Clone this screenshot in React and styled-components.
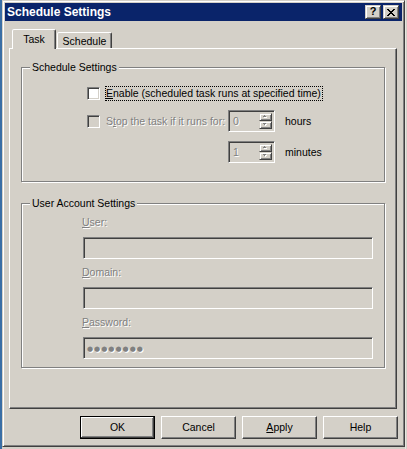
import React from "react";
import styled, { createGlobalStyle } from "styled-components";

const FACE = "#d4d0c8";
const SHADOW = "#808080";
const DARK = "#404040";
const HILITE = "#ffffff";
const CAPTION = "#0a246a";

const Global = createGlobalStyle`
  html, body { margin: 0; padding: 0; background: ${FACE}; }
  body {
    font-family: "Liberation Sans", Arial, sans-serif;
    font-size: 10.5px;
    color: #000;
  }
  * { box-sizing: border-box; }
`;

const Screen = styled.div`
  display: flex;
  width: 407px;
  height: 449px;
  overflow: hidden;
  background: ${FACE};
`;

const Desktop = styled.div`
  width: 2px;
  flex-shrink: 0;
  background: #3a6ea5;
`;

const BehindWindow = styled.div`
  flex: 1;
  background: ${FACE};
  border-left: 1px solid #e8e6e0;
`;

const Dialog = styled.div`
  width: 403px;
  height: 447px;
  flex-shrink: 0;
  background: ${FACE};
  border: 1px solid;
  border-color: ${FACE} ${DARK} ${DARK} ${FACE};
  box-shadow: inset 1px 1px ${HILITE}, inset -1px -1px ${SHADOW};
  padding: 2px;
  display: flex;
  flex-direction: column;
`;

const TitleBar = styled.div`
  height: 18px;
  background: ${CAPTION};
  display: flex;
  align-items: center;
  padding: 0 3px 0 2px;
  flex-shrink: 0;
`;

const TitleText = styled.span`
  color: #fff;
  font-weight: bold;
  font-size: 12px;
  line-height: 14px;
`;

const CaptionButtons = styled.div`
  margin-left: auto;
  display: flex;
  gap: 2px;
`;

const CaptionButton = styled.div`
  width: 16px;
  height: 14px;
  background: ${FACE};
  border: 1px solid;
  border-color: ${FACE} ${DARK} ${DARK} ${FACE};
  box-shadow: inset 1px 1px ${HILITE}, inset -1px -1px ${SHADOW};
  display: flex;
  align-items: center;
  justify-content: center;
  font-weight: bold;
  font-size: 11px;
  line-height: 11px;
  color: #000;
  padding-bottom: ${(p) => (p.$glyph ? 1 : 0)}px;
`;

const Content = styled.div`
  flex: 1;
  display: flex;
  flex-direction: column;
  padding: 8px 5px 0 4px;
`;

const TabRow = styled.div`
  display: flex;
  align-items: flex-end;
  height: 19px;
  padding-left: 3px;
  position: relative;
  z-index: 1;
`;

const Tab = styled.div`
  width: ${(p) => p.$w}px;
  height: ${(p) => (p.$active ? 20 : 16)}px;
  margin-bottom: ${(p) => (p.$active ? -1 : 0)}px;
  margin-left: ${(p) => p.$ml || 0}px;
  background: ${FACE};
  border: 1px solid;
  border-bottom: none;
  border-color: ${HILITE} ${DARK} transparent ${HILITE};
  border-radius: 2px 2px 0 0;
  box-shadow: inset -1px 0 ${SHADOW};
  display: flex;
  justify-content: center;
  padding-top: ${(p) => (p.$active ? 3 : 2)}px;
  line-height: 13px;
`;

const Panel = styled.div`
  height: 361px;
  flex-shrink: 0;
  border: 1px solid;
  border-color: ${HILITE} ${DARK} ${DARK} ${HILITE};
  box-shadow: inset -1px -1px ${SHADOW};
  padding: 18px 10px 0 11px;
  display: flex;
  flex-direction: column;
  gap: 21px;
`;

const Group = styled.div`
  position: relative;
  width: 364px;
  border: 1px solid ${SHADOW};
  box-shadow: inset 1px 1px ${HILITE}, 1px 1px ${HILITE};
  padding: ${(p) => p.$pad};
`;

const GroupTitle = styled.span`
  position: absolute;
  top: -7px;
  left: 8px;
  padding: 0 2px;
  background: ${FACE};
  line-height: 13px;
  white-space: nowrap;
`;

const OptionsGrid = styled.div`
  display: grid;
  grid-template-columns: 141px 47px auto;
  grid-template-rows: 15px 22px 22px;
  row-gap: 9px;
  align-items: center;
`;

const CheckRow = styled.div`
  display: flex;
  align-items: center;
  grid-column: ${(p) => (p.$span ? "1 / -1" : "auto")};
  white-space: nowrap;
`;

const CheckBox = styled.span`
  width: 13px;
  height: 13px;
  flex-shrink: 0;
  border: 1px solid;
  border-color: ${SHADOW} ${HILITE} ${HILITE} ${SHADOW};
  box-shadow: inset 1px 1px ${DARK}, inset -1px -1px ${FACE};
  background: ${(p) => (p.$disabled ? FACE : HILITE)};
`;

const Label = styled.span`
  line-height: 13px;
  white-space: nowrap;
  margin-left: ${(p) => p.$ml || 0}px;
  color: ${(p) => (p.$disabled ? SHADOW : "#000")};
  text-shadow: ${(p) => (p.$disabled ? `1px 1px 0 ${HILITE}` : "none")};
  border: ${(p) => (p.$focus ? "1px dotted #000" : "none")};
  padding: ${(p) => (p.$focus ? "0 1px 0 0" : "0")};
`;

const Key = styled.span`
  text-decoration: underline;
`;

const Unit = styled.span`
  line-height: 13px;
  margin-left: 10px;
`;

const SpinBox = styled.div`
  width: 47px;
  height: 22px;
  border: 1px solid;
  border-color: ${SHADOW} ${HILITE} ${HILITE} ${SHADOW};
  box-shadow: inset 1px 1px ${DARK}, inset -1px -1px ${FACE};
  background: ${FACE};
  padding: 2px;
  display: flex;
`;

const SpinValue = styled.span`
  flex: 1;
  padding: 2px 0 0 2px;
  line-height: 13px;
  color: ${SHADOW};
  text-shadow: 1px 1px 0 ${HILITE};
`;

const SpinButtons = styled.div`
  width: 13px;
  display: flex;
  flex-direction: column;
`;

const SpinHalf = styled.div`
  flex: 1;
  background: ${FACE};
  border: 1px solid;
  border-color: ${FACE} ${DARK} ${DARK} ${FACE};
  box-shadow: inset 1px 1px ${HILITE}, inset -1px -1px ${SHADOW};
  display: flex;
  align-items: center;
  justify-content: center;
`;

const FieldLabel = styled.div`
  line-height: 13px;
  color: ${SHADOW};
  text-shadow: 1px 1px 0 ${HILITE};
  margin: ${(p) => (p.$first ? "0" : "7px")} 0 8px -1px;
`;

const TextBox = styled.div`
  width: 290px;
  height: 22px;
  border: 1px solid;
  border-color: ${SHADOW} ${HILITE} ${HILITE} ${SHADOW};
  box-shadow: inset 1px 1px ${DARK}, inset -1px -1px ${FACE};
  background: ${FACE};
  padding: 3px 0 0 3px;
  display: flex;
  align-items: center;
`;

const Dots = styled.span`
  font-family: "DejaVu Sans", sans-serif;
  font-size: 7px;
  line-height: 13px;
  letter-spacing: 1px;
  color: ${SHADOW};
  text-shadow: 1px 1px 0 ${HILITE};
`;

const ButtonRow = styled.div`
  display: flex;
  justify-content: flex-end;
  gap: 6px;
  margin-top: 7px;
  margin-right: -1px;
`;

const Button = styled.div`
  width: 75px;
  height: 23px;
  background: ${FACE};
  display: flex;
  align-items: center;
  justify-content: center;
  line-height: 13px;
  border: 1px solid;
  border-color: ${(p) =>
    p.$default ? "#000" : `${HILITE} ${DARK} ${DARK} ${HILITE}`};
  box-shadow: ${(p) =>
    p.$default
      ? `inset -1px -1px ${DARK}, inset 1px 1px ${HILITE}, inset -2px -2px ${SHADOW}`
      : `inset -1px -1px ${SHADOW}`};
`;

const CloseGlyph = () => (
  <svg width="8" height="7" viewBox="0 0 8 7" shapeRendering="crispEdges">
    <g fill="#000">
      <rect x="0" y="0" width="2" height="1" />
      <rect x="6" y="0" width="2" height="1" />
      <rect x="1" y="1" width="2" height="1" />
      <rect x="5" y="1" width="2" height="1" />
      <rect x="2" y="2" width="4" height="1" />
      <rect x="3" y="3" width="2" height="1" />
      <rect x="2" y="4" width="4" height="1" />
      <rect x="1" y="5" width="2" height="1" />
      <rect x="5" y="5" width="2" height="1" />
      <rect x="0" y="6" width="2" height="1" />
      <rect x="6" y="6" width="2" height="1" />
    </g>
  </svg>
);

const ArrowShape = ({ up }) =>
  up ? (
    <>
      <rect x="1" y="0" width="1" height="1" />
      <rect x="0" y="1" width="3" height="1" />
    </>
  ) : (
    <>
      <rect x="0" y="0" width="3" height="1" />
      <rect x="1" y="1" width="1" height="1" />
    </>
  );

const Arrow = ({ up }) => (
  <svg width="5" height="4" viewBox="0 0 5 4" shapeRendering="crispEdges">
    <g fill={HILITE} transform="translate(1,1)">
      <ArrowShape up={up} />
    </g>
    <g fill={SHADOW}>
      <ArrowShape up={up} />
    </g>
  </svg>
);

const Spinner = ({ value }) => (
  <SpinBox>
    <SpinValue>{value}</SpinValue>
    <SpinButtons>
      <SpinHalf>
        <Arrow up />
      </SpinHalf>
      <SpinHalf>
        <Arrow />
      </SpinHalf>
    </SpinButtons>
  </SpinBox>
);

export default function App() {
  return (
    <>
      <Global />
      <Screen>
        <Desktop />
        <Dialog>
          <TitleBar>
            <TitleText>Schedule Settings</TitleText>
            <CaptionButtons>
              <CaptionButton $glyph>?</CaptionButton>
              <CaptionButton>
                <CloseGlyph />
              </CaptionButton>
            </CaptionButtons>
          </TitleBar>
          <Content>
            <TabRow>
              <Tab $active $w={44}>
                Task
              </Tab>
              <Tab $w={55} $ml={1}>
                Schedule
              </Tab>
            </TabRow>
            <Panel>
              <Group $pad="18px 0 18px 65px">
                <GroupTitle>Schedule Settings</GroupTitle>
                <OptionsGrid>
                  <CheckRow $span>
                    <CheckBox />
                    <Label $ml={5} $focus>
                      <Key>E</Key>nable (scheduled task runs at specified time)
                    </Label>
                  </CheckRow>
                  <CheckRow>
                    <CheckBox $disabled />
                    <Label $ml={6} $disabled>
                      S<Key>t</Key>op the task if it runs for:
                    </Label>
                  </CheckRow>
                  <Spinner value="0" />
                  <Unit>hours</Unit>
                  <span />
                  <Spinner value="1" />
                  <Unit>minutes</Unit>
                </OptionsGrid>
              </Group>
              <Group $pad="12px 0 8px 61px">
                <GroupTitle>User Account Settings</GroupTitle>
                <FieldLabel $first>
                  <Key>U</Key>ser:
                </FieldLabel>
                <TextBox />
                <FieldLabel>
                  <Key>D</Key>omain:
                </FieldLabel>
                <TextBox />
                <FieldLabel>
                  <Key>P</Key>assword:
                </FieldLabel>
                <TextBox>
                  <Dots>●●●●●●●●</Dots>
                </TextBox>
              </Group>
            </Panel>
            <ButtonRow>
              <Button $default>OK</Button>
              <Button>Cancel</Button>
              <Button>
                <span>
                  <Key>A</Key>pply
                </span>
              </Button>
              <Button>Help</Button>
            </ButtonRow>
          </Content>
        </Dialog>
        <BehindWindow />
      </Screen>
    </>
  );
}
